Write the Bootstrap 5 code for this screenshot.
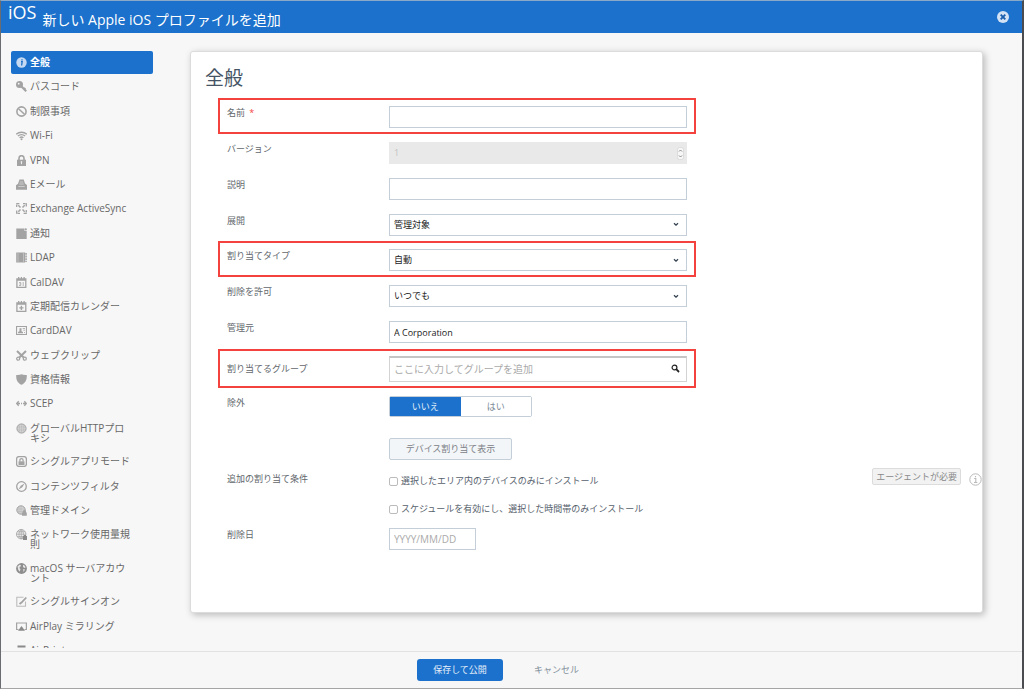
<!DOCTYPE html>
<html lang="ja">
<head>
<meta charset="utf-8">
<meta name="viewport" content="width=device-width, initial-scale=1">
<title>新しい Apple iOS プロファイルを追加</title>
<link href="https://cdn.jsdelivr.net/npm/bootstrap@5.3.0/dist/css/bootstrap.min.css" rel="stylesheet">
<style>
:root { --brand: #1b71cb; --line: #c3ced9; --ink: #62676c; }
body { font: 10px/10px "Open Sans", "Noto Sans CJK JP", sans-serif; color: var(--ink); background: #f7f7f7; border: 1px solid #6a6c6f; border-top-color: #8aa9c9; border-right: 2px solid #4a4c4f; border-bottom-color: #a5a5a5; }
.titlebar { background: var(--brand); height: 32px; padding: 0 13px 0 7px; color: #fff; flex: none; }
.brand-mark { font-size: 18px; line-height: 23px; }
.titlebar h1 { font-size: 14px; line-height: 20px; font-weight: 400; padding-top: 9px; margin: 0 0 0 6px; }
.close-btn { width: 12px; height: 12px; color: #d3e3f5; padding: 0; border: 0; background: none; line-height: 0; }
.side { width: 152px; padding: 18px 0 0 10px; margin-bottom: 3px; overflow-y: auto; scrollbar-width: none; }
.side::-webkit-scrollbar { display: none; }
.side-list { min-height: 611px; }
.side-item { display: flex; gap: 3px; padding: 6px 20px 6px 5px; color: #686868; text-decoration: none; border-radius: 2px; }
.side-item svg { flex: none; width: 11px; height: 11px; color: #a3a3a3; }
.side-item.current { background: var(--brand); color: #fff; font-weight: 600; }
.side-item.current svg { color: #c5daf2; }
svg .s { fill: none; stroke: currentColor; }
.panel { background: #fff; border: 1px solid #dcdcdc; border-radius: 3px; box-shadow: 2px 2px 7px rgba(0,0,0,.25); margin: 18px 39px 38px 37px; padding: 14px 0 0 14px; }
.panel h2 { font-size: 19px; line-height: 24px; margin: 0 0 8px; color: #455464; }
form { padding-left: 13px; font-size: 9px; }
.field { display: flex; position: relative; padding: 0 9px; max-width: 478px; min-height: 36px; }
.even-rows { display: grid; grid-auto-rows: 1fr; min-height: 251px; }
.even-rows .field { min-height: 0; }
.field > label, .field > .lbl { width: 162px; flex: none; padding-top: 10px; }
.field > .ctl { flex: 1; padding-top: 8px; position: relative; }
.required { color: #f4423f; margin-left: 2px; }
.marked::after { content: ""; position: absolute; inset: 0; border: 2px solid #f4423f; pointer-events: none; }
.field.wide { max-width: none; padding-right: 0; min-height: 56px; }
.box.form-control, .box.form-select { font-size: 9px; line-height: 18px; height: 22px; min-height: 0; padding: 0 4px; border: 1px solid var(--line); border-radius: 0; color: #222; background-color: #fff; }
.box.form-select { background: #fff url("data:image/svg+xml,%3Csvg xmlns='http://www.w3.org/2000/svg' viewBox='0 0 6 5'%3E%3Cpath d='M1 1.2l2 2 2-2' fill='none' stroke='%23344250' stroke-width='1.3'/%3E%3C/svg%3E") no-repeat right 7px center / 6px 5px; }
.box::placeholder { color: #aaa; opacity: 1; font-size: 10px; }
.box.form-control:disabled { background: #e9e9e9; border-color: #e9e9e9; color: #c2c2c2; appearance: textfield; }
.box::-webkit-inner-spin-button { display: none; }
.spin { position: absolute; right: 3px; top: 13px; width: 7px; height: 13px; }
.group-row { min-height: 39px; align-items: center; }
.field.group-row > label, .field.group-row > .ctl { padding-top: 0; }
.group-row .box { height: 26px; border-color: #d3d3d3; border-top: 2px solid #c5c5c5; }
.lens { position: absolute; right: 7px; top: 8px; width: 9px; height: 9px; padding: 0; border: 0; background: none; color: #222; line-height: 0; }
.exclude-row { min-height: 42px; }
.preview-row { min-height: 34px; }
.toggle { border: 1px solid var(--line); border-radius: 2px; width: 143px; height: 21px; }
.toggle button { flex: 1; border: 0; padding: 0; background: #fff; color: #7b8a98; }
.toggle .on { background: var(--brand); color: #e8f1fb; }
.show-btn { border: 1px solid var(--line); border-radius: 2px; background: #f3f6f8; color: #7b8087; height: 22px; width: 123px; padding: 0; }
.tick { height: 10px; gap: 3px; color: #56616c; margin-bottom: 18px; }
.tick input { width: 9px; height: 9px; margin: 1px 0 0; border: 1px solid #bbb; border-radius: 2px; appearance: none; background: #fff; }
.tick input:checked { background: var(--brand); }
.agent { border: 1px solid #dcdcdc; background: #f2f2f2; border-radius: 2px; height: 17px; line-height: 15px; padding: 0 3px; color: #888; margin-top: 4px; }
.info { width: 13px; height: 13px; color: #b9b9b9; margin: 9px 0 0 8px; }
.date { max-width: 87px; }
footer { border-top: 1px solid #e2e2e2; height: 37px; gap: 31px; padding-left: 416px; font-size: 9px; flex: none; }
footer button { height: 22px; border: 0; border-radius: 3px; }
.save { width: 86px; background: var(--brand); color: #e4eefa; padding: 0; }
.cancel { background: none; color: #83909c; padding: 0; }
</style>
<script src="https://cdn.jsdelivr.net/npm/bootstrap@5.3.0/dist/js/bootstrap.bundle.min.js"></script>
</head>
<body class="vh-100 d-flex flex-column overflow-hidden">
<header class="titlebar d-flex">
  <span class="brand-mark">iOS</span>
  <h1>新しい Apple iOS プロファイルを追加</h1>
  <button class="close-btn ms-auto align-self-center" aria-label="閉じる"><svg width="12" height="12" viewBox="0 0 12 12"><circle cx="6" cy="6" r="6" fill="currentColor"/><path d="M3.7 3.7l4.6 4.6M8.3 3.7L3.7 8.3" stroke="#1b5fae" stroke-width="1.9"/></svg></button>
</header>

<div class="d-flex flex-fill overflow-hidden">
  <nav class="side flex-shrink-0">
    <div class="side-list d-flex flex-column justify-content-between">
      <a class="side-item current" href="#"><svg viewBox="0 0 11 11"><circle cx="5.500" cy="5.500" r="5.200" fill="currentColor"/><path d="M5 4.600h1.200L5.600 8.500M6 2.300v1.300" stroke="#1b71cb" stroke-width="1.300" fill="none"/></svg>全般</a>
      <a class="side-item" href="#"><svg viewBox="0 0 11 11"><circle cx="3.500" cy="3.500" r="3.500" fill="currentColor"/><circle cx="2.700" cy="2.700" r=".9" fill="#f7f7f7"/><path class="s" d="M5 5l5.200 5.200M8 8.300l1.300-1.300" stroke-width="2.200"/></svg>パスコード</a>
      <a class="side-item" href="#"><svg viewBox="0 0 11 11"><circle class="s" cx="5.500" cy="5.500" r="4.600" stroke-width="1.600"/><path class="s" d="M2.500 2.700l6 5.600" stroke-width="1.500"/></svg>制限事項</a>
      <a class="side-item" href="#"><svg viewBox="0 0 11 11"><path class="s" d="M.2 4.200c3-2.600 7.600-2.600 10.600 0M1.900 6.100c2-1.800 5.200-1.800 7.200 0M3.600 7.800c1.100-.9 2.700-.9 3.800 0" stroke-width="1.400"/><circle cx="5.500" cy="9.200" r="1" fill="currentColor"/></svg>Wi-Fi</a>
      <a class="side-item" href="#"><svg viewBox="0 0 11 11"><path class="s" d="M3 5V3.200a2.500 2.500 0 015 0V5" stroke-width="1.600"/><path fill="currentColor" d="M1 4.700h9V11H1z"/><path d="M5.500 6.500v2.700M4.600 6.900h1.600" stroke="#f7f7f7" stroke-width=".9"/></svg>VPN</a>
      <a class="side-item" href="#"><svg viewBox="0 0 11 11"><path fill="currentColor" d="M3.500.6h4.200l1.300 4L11 6v4.700H0V6.200l2-1.400z"/><path d="M3.800 3h3.400M3.200 5h4.600M2.300 7.500h6.400" stroke="#dedede" stroke-width=".7"/></svg>Eメール</a>
      <a class="side-item" href="#"><svg viewBox="0 0 11 11"><path class="s" d="M.7 4V.7H4M7 .7h3.300V4M10.300 7v3.300H7M4 10.300H.7V7" stroke-width="1.300" stroke-dasharray="2.600 .6"/><path class="s" d="M2.300 2.300l2.200 2.200M8.700 2.300L6.500 4.500M8.700 8.700L6.500 6.500M2.300 8.700l2.200-2.200" stroke-width="1.500"/></svg>Exchange ActiveSync</a>
      <a class="side-item" href="#"><svg viewBox="0 0 11 11"><path fill="currentColor" d="M.3.6h8.200v2.300h2.200v8H.3z"/><circle cx="9.800" cy="1.400" r="1.100" fill="currentColor"/></svg>通知</a>
      <a class="side-item" href="#"><svg viewBox="0 0 11 11"><path fill="currentColor" d="M.2.5h9v10h-9z"/><path class="s" d="M10.100 1v9" stroke-width="1.500" stroke-dasharray="1.800 .8"/><path d="M2 .5v10M7.500.5v10" stroke="#ccc" stroke-width=".7"/></svg>LDAP</a>
      <a class="side-item" href="#"><svg viewBox="0 0 11 11"><path class="s" d="M.9 2h8.900v8.400H.9zM.9 3h9M2.700 0v2.500M5.400 0v2.500M8.100 0v2.500" stroke-width="1.300"/><path class="s" d="M3 5.500h1.800v3H3M3.300 7h1.500M7.200 5v4" stroke-width=".8"/></svg>CalDAV</a>
      <a class="side-item" href="#"><svg viewBox="0 0 11 11"><path class="s" d="M.9 2h8.900v8.400H.9zM.9 3h9M2.700 0v2.500M5.400 0v2.500M8.100 0v2.500" stroke-width="1.300"/><path class="s" d="M5.400 4.800V9M3.300 6.900h4.200" stroke-width="1.400"/></svg>定期配信カレンダー</a>
      <a class="side-item" href="#"><svg viewBox="0 0 11 11"><path class="s" d="M.5 1.500h10v8H.5z" stroke-width="1.200"/><path fill="currentColor" d="M2 8.300V7l1.500-.7V3.300h2v3L7 7v1.300z"/><path class="s" d="M6.700 3.500H9M7.300 5.200H9M8 7.500h1" stroke-width=".8"/></svg>CardDAV</a>
      <a class="side-item" href="#"><svg viewBox="0 0 11 11"><path class="s" d="M1 1l6.700 6.500M10 1L3.300 7.500" stroke-width="2"/><circle class="s" cx="2.200" cy="8.700" r="1.500" stroke-width="1.300"/><circle class="s" cx="8.800" cy="8.700" r="1.500" stroke-width="1.300"/></svg>ウェブクリップ</a>
      <a class="side-item" href="#"><svg viewBox="0 0 11 11"><path fill="currentColor" d="M.2 1C2.500 1.200 4 1 5.500.3 7 1 8.500 1.200 10.800 1c.2 5-1.500 8.300-5.300 9.800C1.700 9.300 0 6 .2 1z"/></svg>資格情報</a>
      <a class="side-item" href="#"><svg viewBox="0 0 11 11"><path class="s" d="M2.700 3.200L.7 5.500l2 2.300M8.300 3.200l2 2.300-2 2.300M1 5.500h3M7 5.500h3M5 5.500h1" stroke-width="1.300"/></svg>SCEP</a>
      <a class="side-item" href="#"><svg viewBox="0 0 11 11"><circle cx="5.500" cy="5.500" r="4.600" fill="#d2d2d2" stroke="currentColor"/><path class="s" d="M1 4h9M1 7h9M5.500 1v9M3.300 1.500v8M7.700 1.500v8" stroke-width=".3"/></svg>グローバルHTTPプロキシ</a>
      <a class="side-item" href="#"><svg viewBox="0 0 11 11"><rect class="s" x=".6" y=".6" width="9.800" height="9.800" rx="2.300" stroke-width="1.300"/><path class="s" d="M3.900 5.500V4.200a1.600 1.600 0 013.200 0v1.300" stroke-width="1.300"/><path fill="currentColor" d="M2.500 5.300h6v3.700h-6z"/></svg>シングルアプリモード</a>
      <a class="side-item" href="#"><svg viewBox="0 0 11 11"><circle class="s" cx="5.500" cy="5.500" r="4.800" stroke-width="1.300"/><path fill="currentColor" d="M8.500 2.500L6.300 6.300 2.500 8.500l2.200-3.800z"/></svg>コンテンツフィルタ</a>
      <a class="side-item" href="#"><svg viewBox="0 0 11 11"><circle cx="5" cy="5" r="4.200" fill="#d2d2d2" stroke="currentColor"/><path class="s" d="M1 4h8M1 6.500h8M5 1v8M3 1.500v7" stroke-width=".3"/><path fill="currentColor" d="M6 7.500h.7V6.700a1.700 1.700 0 013.400 0v.8h.7v3.300H6z"/></svg>管理ドメイン</a>
      <a class="side-item" href="#"><svg viewBox="0 0 11 11"><circle class="s" cx="5.200" cy="5.200" r="4.700" stroke-width=".9"/><path class="s" d="M.5 5.200h9.400M1.300 2.800h7.800M1.300 7.700h7.800M5.200.5v9.400M5.200.5c-3 2.500-3 7 0 9.400M5.200.5c3 2.500 3 7 0 9.400" stroke-width=".8"/><path fill="#8a8a8a" d="M7 7h1V6h2v1h1v4H7z"/></svg>ネットワーク使用量規則</a>
      <a class="side-item" href="#"><svg viewBox="0 0 11 11"><circle cx="5.500" cy="5.500" r="5.400" fill="#8e8e8e"/><path fill="#e6e6e6" d="M1.500 3.500l2-1.700 1.500.3-.5 1.500L3.300 4.700l1.200 1.500-.8 2.500L2.200 6.700zM7 1.700l1.800 1.100.8 1.800-1.500.4L7 3.800zM7.200 6l1.800.5-1.500 2.400z"/></svg>macOS サーバアカウント</a>
      <a class="side-item" href="#"><svg viewBox="0 0 11 11"><path class="s" d="M7.500 1.300H.8v8.900h8.700V5.500" stroke-width="1.100" stroke-opacity=".7"/><path class="s" d="M10.300 1.500L5.500 6.500 3.500 8" stroke-width="1.800"/></svg>シングルサインオン</a>
      <a class="side-item" href="#"><svg viewBox="0 0 11 11"><path class="s" d="M2.500 8.500H.6V2h9.800v6.500H8.500" stroke-width="1.200"/><path fill="#8a8a8a" d="M5.500 5L9 9.700H2z"/></svg>AirPlay ミラリング</a>
      <a class="side-item" href="#"><svg viewBox="0 0 11 11"><path fill="#8a8a8a" d="M1.500.5h8v2h-8zM0 3.500h11v5H0z"/></svg>AirPrint</a>
    </div>
  </nav>

  <main class="panel flex-fill">
    <h2 class="fw-normal">全般</h2>
    <form>
      <div class="even-rows">
        <div class="field marked"><label for="name">名前 <span class="required">*</span></label><div class="ctl"><input id="name" class="form-control box" type="text"></div></div>
        <div class="field"><label for="ver">バージョン</label><div class="ctl"><input id="ver" class="form-control box" type="number" value="1" disabled><svg class="spin" viewBox="0 0 7 13"><rect x=".5" y=".5" width="6" height="12" rx="2" fill="#f7f7f7" stroke="#dcdcdc"/><path d="M2 4.500L3.500 3 5 4.500M2 8.500L3.500 10 5 8.500" fill="none" stroke="#888"/></svg></div></div>
        <div class="field"><label for="desc">説明</label><div class="ctl"><input id="desc" class="form-control box" type="text"></div></div>
        <div class="field"><label for="deploy">展開</label><div class="ctl"><select id="deploy" class="form-select box"><option>管理対象</option></select></div></div>
        <div class="field marked"><label for="atype">割り当てタイプ</label><div class="ctl"><select id="atype" class="form-select box"><option>自動</option></select></div></div>
        <div class="field"><label for="removal">削除を許可</label><div class="ctl"><select id="removal" class="form-select box"><option>いつでも</option></select></div></div>
        <div class="field"><label for="owner">管理元</label><div class="ctl"><input id="owner" class="form-control box" type="text" value="A Corporation"></div></div>
      </div>
      <div class="field group-row marked"><label for="groups">割り当てるグループ</label><div class="ctl"><input id="groups" class="form-control box" type="text" placeholder="ここに入力してグループを追加"><button type="button" class="lens" aria-label="検索"><svg width="9" height="9" viewBox="0 0 9 9"><circle cx="3.500" cy="3.500" r="2.400" fill="none" stroke="currentColor" stroke-width="1.200"/><path d="M5.200 5.200L8 8" stroke="currentColor" stroke-width="1.800"/></svg></button></div></div>
      <div class="field exclude-row"><span class="lbl">除外</span><div class="ctl"><div class="toggle d-flex" role="group" aria-label="除外"><button type="button" class="on">いいえ</button><button type="button">はい</button></div></div></div>
      <div class="field preview-row"><span class="lbl"></span><div class="ctl"><button type="button" class="show-btn">デバイス割り当て表示</button></div></div>
      <div class="field wide"><span class="lbl">追加の割り当て条件</span>
        <div class="pt-2 mt-1">
          <label class="tick d-flex"><input type="checkbox">選択したエリア内のデバイスのみにインストール</label>
          <label class="tick d-flex mb-0"><input type="checkbox">スケジュールを有効にし、選択した時間帯のみインストール</label>
        </div>
        <span class="agent ms-auto">エージェントが必要</span>
        <svg class="info" viewBox="0 0 13 13"><circle class="s" cx="6.500" cy="6.500" r="5.700" stroke-width="1"/><path class="s" d="M5.200 5.500h1.600v4M5 9.500h3.300M6.500 3v1.300" stroke-width="1.100"/></svg>
      </div>
      <div class="field"><label for="rdate">削除日</label><div class="ctl"><input id="rdate" class="form-control box date" type="text" placeholder="YYYY/MM/DD"></div></div>
    </form>
  </main>
</div>

<footer class="d-flex align-items-center">
  <button class="save">保存して公開</button>
  <button class="cancel">キャンセル</button>
</footer>
</body>
</html>
